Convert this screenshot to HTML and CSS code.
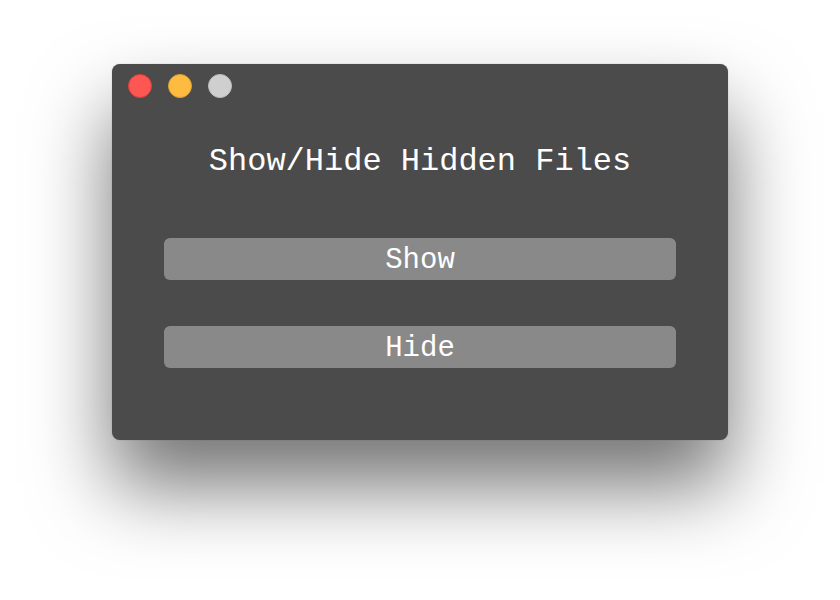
FILE: index.html
```html
<!DOCTYPE html>
<html>
<head>
<meta charset="utf-8">
<link rel="stylesheet" href="styles.css">
</head>
<body>
<div class="window">
  <div class="titlebar">
    <span class="light red"></span>
    <span class="light yellow"></span>
    <span class="light gray"></span>
  </div>
  <h1 class="title">Show/Hide Hidden Files</h1>
  <div class="buttons">
    <button class="btn">Show</button>
    <button class="btn">Hide</button>
  </div>
</div>
</body>
</html>
```
FILE: styles.css
```css
html, body {
  margin: 0;
  padding: 0;
  background: #ffffff;
}
html {
  height: 600px;
  overflow: hidden;
}
body {
  height: 600px;
  box-sizing: border-box;
  padding: 64px 0 0 112px;
  font-family: "Liberation Mono", "Courier New", monospace;
}
.window {
  width: 616px;
  height: 376px;
  background: #4b4b4b;
  border-radius: 8px;
  box-shadow: 0 46px 80px rgba(0, 0, 0, 0.55), 0 0 1px rgba(0,0,0,0.4);
  box-sizing: border-box;
  display: flex;
  flex-direction: column;
}
.titlebar {
  display: flex;
  gap: 16px;
  padding: 10px 0 0 16px;
}
.light {
  width: 24px;
  height: 24px;
  border-radius: 50%;
  box-sizing: border-box;
}
.red { background: #fc5753; border: 1px solid #df3d39; }
.yellow { background: #fdbc40; border: 1px solid #dea034; }
.gray { background: #cfcfcf; border: 1px solid #bdbdbd; }
.title {
  margin: 44px 0 0;
  font-size: 32px;
  line-height: 40px;
  font-weight: normal;
  color: #ffffff;
  text-align: center;
}
.buttons {
  display: flex;
  flex-direction: column;
  gap: 46px;
  padding: 56px 52px 0;
}
.btn {
  height: 42px;
  border: none;
  border-radius: 6px;
  background: #898989;
  color: #ffffff;
  font-family: "Liberation Mono", "Courier New", monospace;
  font-size: 29px;
  line-height: 42px;
  padding: 2px 0 0;
}
```
